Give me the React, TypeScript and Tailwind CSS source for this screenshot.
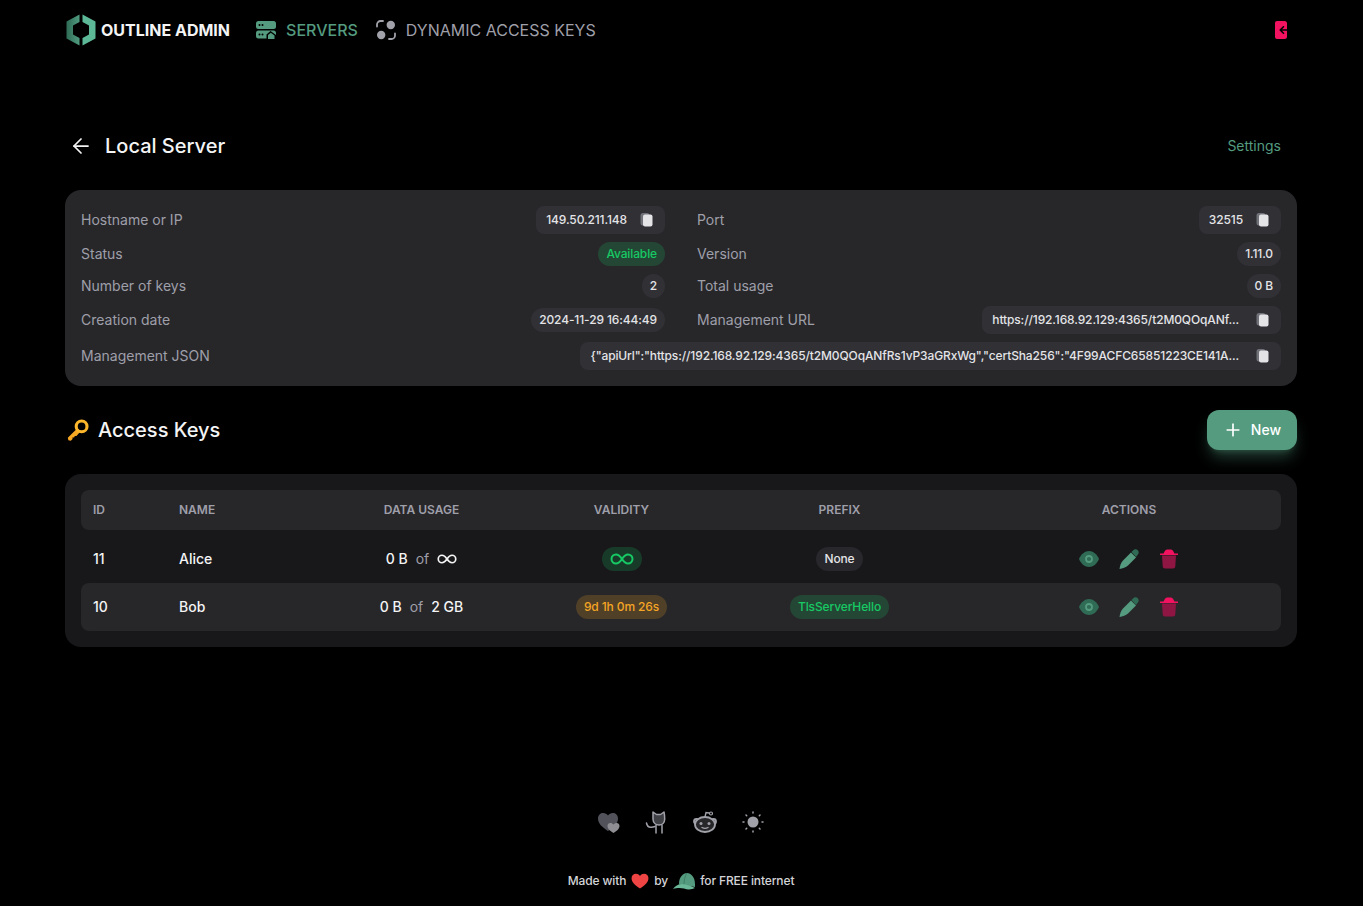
import React from "react";
import { ArrowLeft, Plus } from "lucide-react";

const GRID = "grid grid-cols-[86px_135px_239px_161px_275px_304px] items-center";
const SUCCESS = "bg-[#17c964]/20 text-[#17c964]";
const WARNING = "bg-[#f5a524]/20 text-[#f5a524]";
const SMALL = "text-xs font-medium tracking-[-0.01em]";

function Logo() {
  return (
    <svg viewBox="0 0 30 32" className="h-8 w-8">
      <defs>
        <linearGradient id="logo-left" x1="0" y1="0" x2="1" y2="0">
          <stop offset="0" stopColor="#2f6b55" />
          <stop offset="1" stopColor="#4f9c80" />
        </linearGradient>
      </defs>
      <path d="M13.500 0.500v7.500L7 11.500v9l6.500 3.500v7.500L0.500 24.500v-17z" fill="url(#logo-left)" />
      <path d="M16.500 0.500v7.500l6.500 3.500v9l-6.500 3.500v7.500l13-7v-17z" fill="#5cb896" />
    </svg>
  );
}

function ServersIcon() {
  return (
    <svg viewBox="0 0 22 20" className="h-5 w-6">
      <rect x="1" y="1" width="20" height="8" rx="2.500" fill="#549b7f" />
      <rect x="1" y="10.500" width="20" height="8" rx="2.500" fill="#549b7f" />
      <circle cx="4.500" cy="5" r="1" fill="#000" />
      <circle cx="7.500" cy="5" r="1" fill="#000" />
      <circle cx="4.500" cy="14.500" r="1" fill="#000" />
      <circle cx="7.500" cy="14.500" r="1" fill="#000" />
      <path d="M11.500 19.500v-5l4-3.500 5.500 4v4.500z" fill="#000" />
      <path d="M13 19v-4l2.800-2.200 3.700 2.600V19z" fill="#549b7f" />
    </svg>
  );
}

function DynamicIcon() {
  return (
    <svg viewBox="0 0 20 20" className="h-5 w-6" fill="#a1a1aa">
      <circle cx="14.800" cy="5" r="4.200" />
      <circle cx="5.200" cy="15" r="4.200" />
      <path d="M1 6.500V4.500A3.500 3.500 0 0 1 4.500 1H7M19 13.500v2a3.500 3.500 0 0 1-3.500 3.500H13" fill="none" stroke="#a1a1aa" strokeWidth="1.800" strokeLinecap="round" />
    </svg>
  );
}

function LogoutIcon() {
  return (
    <svg viewBox="0 0 14 20" className="h-5 w-4">
      <path d="M3 1h7.500A2.500 2.500 0 0 1 13 3.500v13a2.500 2.500 0 0 1-2.500 2.500H3a2 2 0 0 1-2-2V3a2 2 0 0 1 2-2z" fill="#f31260" />
      <path d="M14 10H6.500M9.500 6.800 6.200 10l3.300 3.200" fill="none" stroke="#000" strokeWidth="1.600" strokeLinecap="round" strokeLinejoin="round" />
    </svg>
  );
}

function CopyIcon() {
  return (
    <svg viewBox="0 0 16 16" className="h-4 w-4 shrink-0">
      <rect x="1.500" y="1" width="9" height="12.500" rx="2.500" fill="#71717a" />
      <rect x="4" y="2.500" width="9.500" height="12" rx="2" fill="#e4e4e7" />
    </svg>
  );
}

function KeyIcon() {
  return (
    <svg viewBox="0 0 20 20" className="h-6 w-6">
      <path d="M9.500 8.500 1.500 16.500l.5 2 2 .5 1.500-1.500-.2-1.300 1.400.1.700-1.400 1.300.1 3.500-4z" fill="#f5a623" />
      <circle cx="13" cy="7" r="4.500" fill="none" stroke="#fbb62b" strokeWidth="2.600" />
    </svg>
  );
}

function EyeIcon() {
  return (
    <svg viewBox="0 0 20 16" className="h-4 w-5">
      <path d="M0 8C2 3 6 0 10 0s8 3 10 8c-2 5-6 8-10 8S2 13 0 8z" fill="#2f6b55" />
      <circle cx="10" cy="8" r="3" fill="none" stroke="#549b7f" strokeWidth="1.800" />
    </svg>
  );
}

function PenIcon() {
  return (
    <svg viewBox="0 0 20 20" className="h-5 w-5">
      <path d="M.5 20C1 16.500 2 13.500 4 11.500l8-8 5 5-8 8C7 18.500 3.500 19.500.5 20z" fill="#549b7f" />
      <path d="M12.500 3 14 1.500c1.500-1.500 3.500-1.500 4.800-.2C20 2.500 20 4.500 18.700 5.800L17 8z" fill="#2f6b55" />
    </svg>
  );
}

function TrashIcon() {
  return (
    <svg viewBox="0 0 18 20" className="h-5 w-5">
      <path d="M2 6.500h14l-.7 10.500a2.500 2.500 0 0 1-2.500 2.500H5.200A2.500 2.500 0 0 1 2.700 17z" fill="#8f1642" />
      <path d="M0 4.500h3.500C4.500 3 5 0.500 7 0.500h4c2 0 2.500 2.500 3.500 4H18v1.500H0z" fill="#f31260" />
    </svg>
  );
}

function InfinityIcon({ className }: { className: string }) {
  return (
    <svg viewBox="0 0 24 12" className={className} fill="none" stroke="currentColor" strokeWidth="2">
      <path d="M12 6C10 3 8.500 1.500 6 1.500a4.500 4.500 0 0 0 0 9c2.500 0 4-1.500 6-4.500s3.500-4.500 6-4.500a4.500 4.500 0 0 1 0 9c-2.500 0-4-1.500-6-4.500z" />
    </svg>
  );
}

function HeartsIcon() {
  return (
    <svg viewBox="0 0 24 24" className="h-6 w-6">
      <path d="M11 21C5 17 1 13.500 1 8.500 1 5 3.500 3 6.200 3 8.200 3 10 4 11 5.500 12 4 13.800 3 15.800 3 18.500 3 21 5 21 8.500c0 5-4 8.500-10 12.500z" fill="#52525b" />
      <path d="M16.500 23c-3-2-6-4-6-7 0-1.800 1.300-3 2.800-3 1.300 0 2.400.6 3.200 1.600.8-1 1.900-1.600 3.200-1.600 1.500 0 2.800 1.200 2.800 3 0 3-3 5-6 7z" fill="#8e8e93" />
    </svg>
  );
}

function CatIcon() {
  return (
    <svg viewBox="0 0 24 24" className="h-6 w-6" fill="none" stroke="#a1a1aa" strokeWidth="1.500" strokeLinecap="round" strokeLinejoin="round">
      <path d="M1.500 13c.5 2.800 2.500 4.500 5 4.200 1 0 2-.2 3.500-.7" />
      <path d="M11 15v8M17 15v8" />
      <path d="M8 2l3.500 2.500h4L19 2c.5 2.500.7 5 .7 7 0 4-2.700 6-5.700 6s-6-2-6-6c0-2 0-4.500 0-7z" fill="#3f3f46" />
    </svg>
  );
}

function RedditIcon() {
  return (
    <svg viewBox="0 0 24 24" className="h-6 w-6" fill="none" stroke="#a1a1aa" strokeWidth="1.800" strokeLinecap="round">
      <circle cx="3.500" cy="11.500" r="2.500" />
      <circle cx="20.500" cy="11.500" r="2.500" />
      <ellipse cx="12" cy="14.500" rx="10" ry="7.500" fill="#27272a" />
      <path d="M12 7 13 2.500l3 .5" strokeWidth="1.400" />
      <circle cx="18" cy="3.500" r="1.500" strokeWidth="1.200" />
      <circle cx="8" cy="13.500" r="1.500" fill="#a1a1aa" stroke="none" />
      <circle cx="16" cy="13.500" r="1.500" fill="#a1a1aa" stroke="none" />
      <path d="M9 17.500c1.800 1 4.200 1 6 0" strokeWidth="1.400" />
    </svg>
  );
}

function SunIcon() {
  return (
    <svg viewBox="0 0 24 24" className="h-6 w-6" fill="none" stroke="#a1a1aa" strokeWidth="1.500" strokeLinecap="round">
      <circle cx="12" cy="12" r="5.500" fill="#a1a1aa" stroke="none" />
      <path d="M12 2v1M12 21v1M2 12h1M21 12h1M5 5l.7.7M18.300 18.300l.7.7M19 5l-.7.7M5.700 18.300 5 19" />
    </svg>
  );
}

function RedHeart() {
  return (
    <svg viewBox="0 0 20 18" className="h-4 w-5">
      <path d="M10 17.500C4 13.500.5 10 .5 5.800.5 2.800 2.800.8 5.300.8 7.200.8 9 1.800 10 3.400 11 1.800 12.800.8 14.700.8c2.500 0 4.800 2 4.800 5 0 4.200-3.500 7.700-9.500 11.700z" fill="#ef4444" />
    </svg>
  );
}

function CapIcon() {
  return (
    <svg viewBox="0 0 24 18" className="h-5 w-6">
      <path d="M7 12C7 5 11 1 15 1s8 4 8 11v3c-5-1-11-2-16-3z" fill="#549b7f" />
      <path d="M1 17c2-3 5-5 9-5 4 .2 9 2 13 4-3 1.500-7 2-11 .5C8 15.500 4 16 1 17z" fill="#6bb898" />
      <path d="M15 1c-2 3-3 7-3 11" fill="none" stroke="#3a7a62" strokeWidth="0.800" />
    </svg>
  );
}

function Chip({ children, className = "bg-zinc-700/40 text-zinc-200" }: { children: React.ReactNode; className?: string }) {
  return <span className={`inline-flex h-6 items-center rounded-full px-2 ${SMALL} ${className}`}>{children}</span>;
}

function Snippet({ value, cut = false }: { value: string; cut?: boolean }) {
  return (
    <div className={`flex h-7 items-center justify-between gap-3 rounded-lg bg-zinc-700/40 px-2.5 text-zinc-200 ${SMALL}`}>
      <span className={cut ? "truncate pr-1" : "truncate"}>{value}</span>
      <CopyIcon />
    </div>
  );
}

function InfoRow({ label, children }: { label: string; children: React.ReactNode }) {
  return (
    <div className="flex items-center justify-between gap-4">
      <span className="text-sm whitespace-nowrap text-zinc-400">{label}</span>
      {children}
    </div>
  );
}

function Actions() {
  return (
    <div className="flex items-center justify-center gap-5">
      <EyeIcon />
      <PenIcon />
      <TrashIcon />
    </div>
  );
}

export default function App() {
  return (
    <div className="flex h-screen flex-col overflow-hidden bg-black pr-px font-['Inter',sans-serif] text-zinc-100">
      <nav className="mx-auto flex h-16 w-full max-w-7xl shrink-0 items-center justify-between px-6 pb-1">
        <div className="flex items-center gap-6">
          <div className="flex items-center gap-1">
            <Logo />
            <span className="text-base font-bold whitespace-nowrap">OUTLINE ADMIN</span>
          </div>
          <div className="flex items-center gap-4">
            <div className="flex items-center gap-2">
              <ServersIcon />
              <span className="text-base font-medium text-[#549b7f]">SERVERS</span>
            </div>
            <div className="flex items-center gap-2">
              <DynamicIcon />
              <span className="text-base text-zinc-400">DYNAMIC ACCESS KEYS</span>
            </div>
          </div>
        </div>
        <div className="pr-2">
          <LogoutIcon />
        </div>
      </nav>

      <main className="mx-auto mt-0.5 flex w-full max-w-7xl flex-col px-6">
        <div className="mt-14 flex h-12 items-center justify-between">
          <div className="flex items-center gap-3 pl-1">
            <ArrowLeft className="h-6 w-6 text-zinc-100" strokeWidth={1.75} />
            <h1 className="text-xl font-medium">Local Server</h1>
          </div>
          <span className="px-4 text-sm text-[#549b7f]">Settings</span>
        </div>

        <section className="mt-5 rounded-2xl bg-zinc-800 p-4">
          <div className="grid grid-cols-2 gap-x-8 gap-y-2">
            <InfoRow label="Hostname or IP">
              <Snippet value="149.50.211.148" />
            </InfoRow>
            <InfoRow label="Port">
              <Snippet value="32515" />
            </InfoRow>
            <InfoRow label="Status">
              <Chip className={SUCCESS}>Available</Chip>
            </InfoRow>
            <InfoRow label="Version">
              <Chip>1.11.0</Chip>
            </InfoRow>
            <InfoRow label="Number of keys">
              <Chip>2</Chip>
            </InfoRow>
            <InfoRow label="Total usage">
              <Chip>0 B</Chip>
            </InfoRow>
            <InfoRow label="Creation date">
              <Chip>2024-11-29 16:44:49</Chip>
            </InfoRow>
            <InfoRow label="Management URL">
              <Snippet cut value="https://192.168.92.129:4365/t2M0QOqANf..." />
            </InfoRow>
            <div className="col-span-2">
              <InfoRow label="Management JSON">
                <Snippet cut value={'{"apiUrl":"https://192.168.92.129:4365/t2M0QOqANfRs1vP3aGRxWg","certSha256":"4F99ACFC65851223CE141A...'} />
              </InfoRow>
            </div>
          </div>
        </section>

        <div className="mt-6 flex h-10 items-center justify-between">
          <div className="flex items-center gap-2 pl-px">
            <KeyIcon />
            <h2 className="text-xl font-medium">Access Keys</h2>
          </div>
          <button className="flex h-10 items-center gap-2 rounded-xl bg-[#549b7f] px-4 text-sm font-medium text-white shadow-lg shadow-[#549b7f]/40">
            <Plus className="h-5 w-5" />
            New
          </button>
        </div>

        <section className="mt-6 rounded-2xl bg-zinc-900 p-4">
          <div className={`${GRID} h-10 rounded-lg bg-zinc-800 text-xs font-semibold text-zinc-400`}>
            <span className="pl-3">ID</span>
            <span className="pl-3">NAME</span>
            <span className="text-center">DATA USAGE</span>
            <span className="text-center">VALIDITY</span>
            <span className="text-center">PREFIX</span>
            <span className="text-center">ACTIONS</span>
          </div>
          <div className="pt-px">
            <div className={`${GRID} mt-1 h-12 text-sm font-medium`}>
              <span className="pl-3">11</span>
              <span className="pl-3">Alice</span>
              <div className="flex items-center justify-center gap-2">
                <span>0 B</span>
                <span className="font-normal text-zinc-400">of</span>
                <InfinityIcon className="h-3 w-5 text-zinc-100" />
              </div>
              <div className="flex justify-center">
                <Chip className={SUCCESS}>
                  <InfinityIcon className="h-3 w-6" />
                </Chip>
              </div>
              <div className="flex justify-center">
                <Chip>None</Chip>
              </div>
              <Actions />
            </div>
            <div className={`${GRID} h-12 rounded-lg bg-zinc-800 text-sm font-medium`}>
              <span className="pl-3">10</span>
              <span className="pl-3">Bob</span>
              <div className="flex items-center justify-center gap-2">
                <span>0 B</span>
                <span className="font-normal text-zinc-400">of</span>
                <span>2 GB</span>
              </div>
              <div className="flex justify-center">
                <Chip className={WARNING}>9d 1h 0m 26s</Chip>
              </div>
              <div className="flex justify-center">
                <Chip className={SUCCESS}>TlsServerHello</Chip>
              </div>
              <Actions />
            </div>
          </div>
        </section>
      </main>

      <footer className="mt-auto mb-px flex flex-col items-center gap-9 pb-3.5">
        <div className="mb-px flex items-center gap-6">
          <HeartsIcon />
          <CatIcon />
          <RedditIcon />
          <SunIcon />
        </div>
        <div className={`flex items-center gap-1 text-zinc-300 ${SMALL}`}>
          <span>Made with</span>
          <RedHeart />
          <span>by</span>
          <CapIcon />
          <span>for FREE internet</span>
        </div>
      </footer>
    </div>
  );
}
